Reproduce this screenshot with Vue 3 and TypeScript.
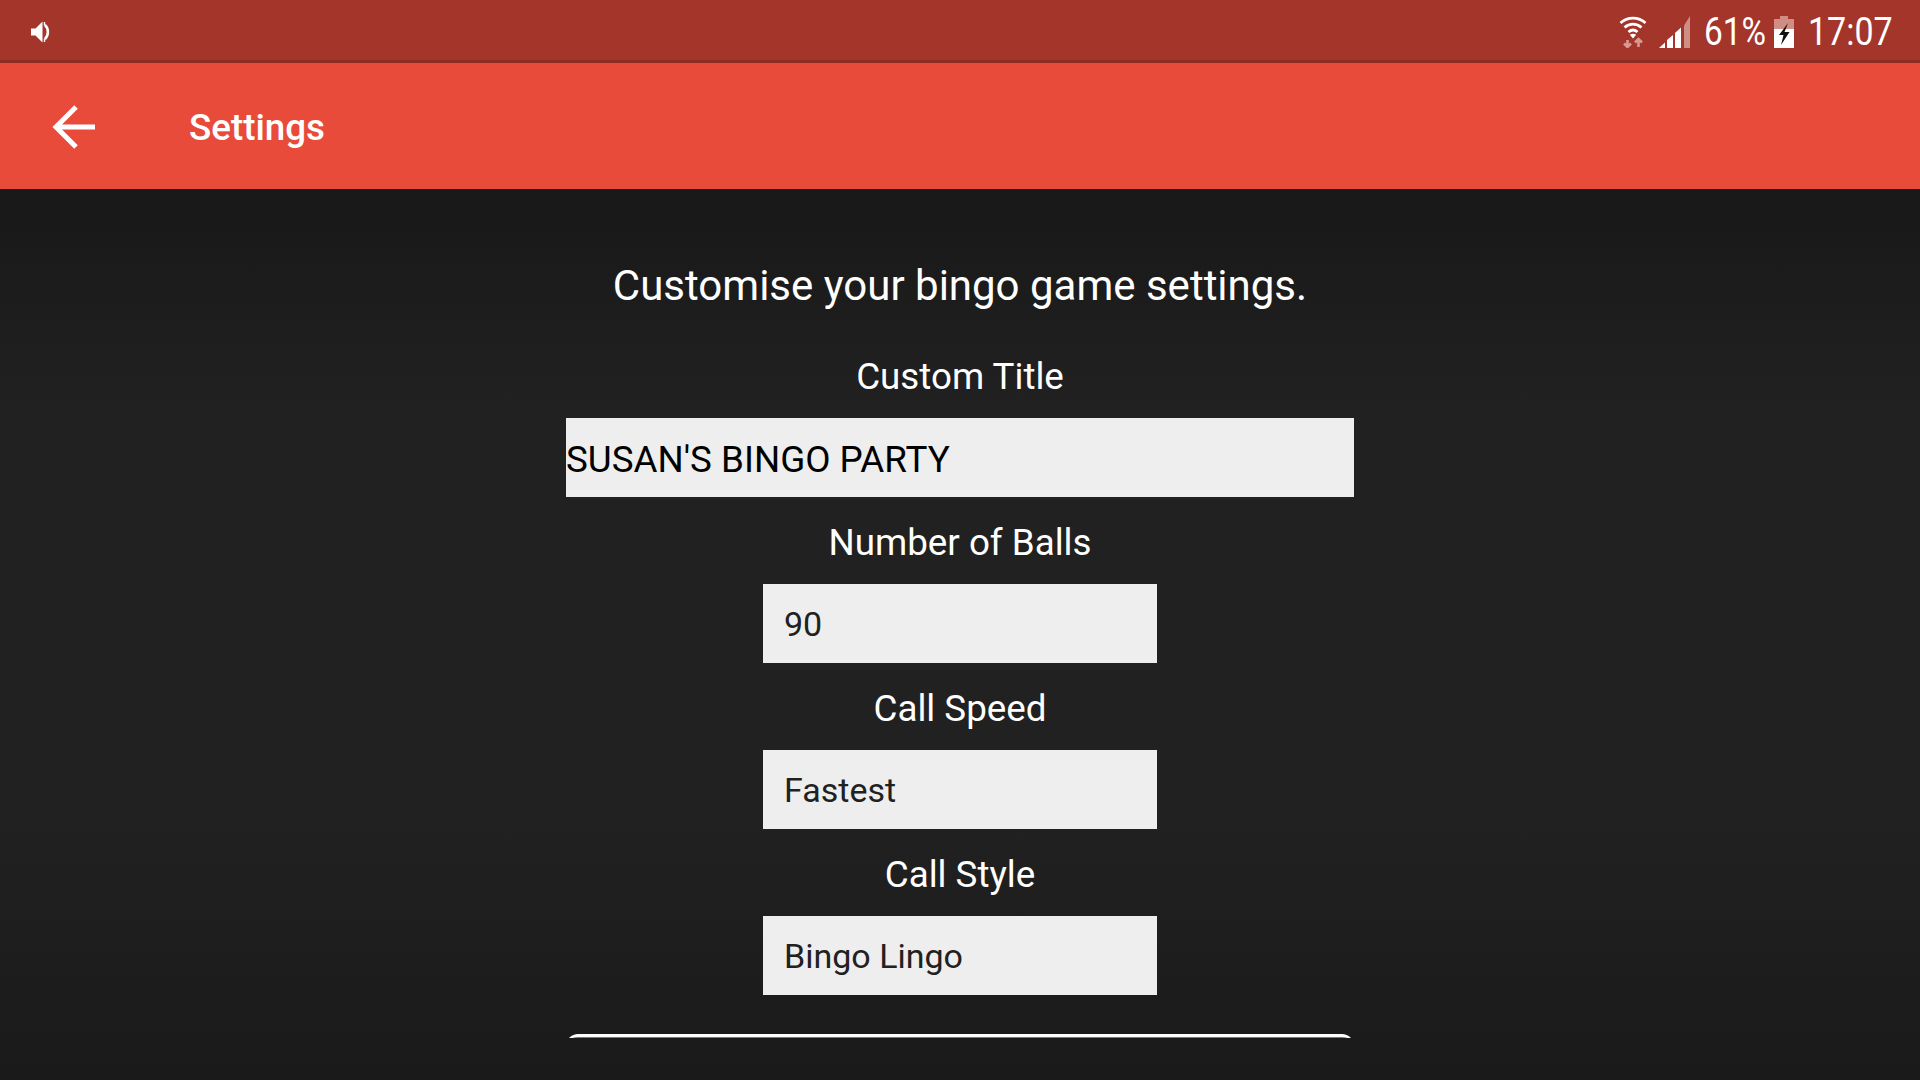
<script setup lang="ts">
interface Field { label: string; value: string; wide?: boolean }
const fields: Field[] = [
  { label: 'Custom Title', value: "SUSAN'S BINGO PARTY", wide: true },
  { label: 'Number of Balls', value: '90' },
  { label: 'Call Speed', value: 'Fastest' },
  { label: 'Call Style', value: 'Bingo Lingo' },
]
</script>

<template>
  <div class="screen">
    <header class="status">
      <svg class="vol" viewBox="0 0 22 22" width="22" height="22">
        <path d="M0 7.500h4.500L11.500 0.500v21l-7-7H0z" fill="#fff" />
        <path d="M14 4c3.800 3.500 3.800 10.500 0 14" fill="none" stroke="#fff" stroke-width="2.600" />
        <path d="M13.500 1v3.500M13.500 17.500V21" stroke="#fff" stroke-width="1.400" />
      </svg>
      <div class="status-right">
        <svg class="wifi" viewBox="0 0 28 33" width="28" height="33">
          <path d="M1.500 8C8.500 1.500 19.500 1.500 26.500 8" fill="none" stroke="#fff" stroke-width="2.800" />
          <path d="M5.500 12.500c5-4.500 12-4.500 17 0" fill="none" stroke="#fff" stroke-width="2.800" />
          <path d="M9.500 17c2.800-2.400 6.200-2.400 9 0" fill="none" stroke="#fff" stroke-width="2.800" />
          <path d="M14 23.500l-3.200-3.800c2.100-1.200 4.300-1.200 6.400 0z" fill="#fff" />
          <path d="M8.500 25v7M5 28.500l3.500 3.500 3.500-3.500" fill="none" stroke="#d99a92" stroke-width="2.600" />
          <path d="M19.500 32v-8M16 27.500l3.500-3.500 3.500 3.500" fill="none" stroke="#d99a92" stroke-width="2.600" />
        </svg>
        <svg class="signal" viewBox="0 0 31 32" width="31" height="32">
          <path d="M0 32l6-5.500V32z" fill="#fff" />
          <path d="M8 32v-8l6-5v13z" fill="#fff" />
          <path d="M16 32V17l6-5.500V32z" fill="#fff" />
          <path d="M25 32V9.500L31 0v32z" fill="#cf8d84" />
        </svg>
        <span class="num pct">61%</span>
        <svg class="batt" viewBox="0 0 20 32" width="20" height="32">
          <path d="M6 0h8v3h6v10H0V3h6z" fill="#cf8d84" />
          <rect x="0" y="13" width="20" height="19" fill="#fff" />
          <path d="M14 7L5 19h4.500L7 29 15.500 16H10.500L14 7z" fill="#111" />
        </svg>
        <span class="num clock">17:07</span>
      </div>
    </header>
    <nav class="toolbar">
      <svg class="back" viewBox="0 0 44 44" width="44" height="44">
        <path d="M43 22H4M24 2L4 22l20 20" fill="none" stroke="#fff" stroke-width="5" />
      </svg>
      <span class="title">Settings</span>
    </nav>
    <main class="content">
      <div class="clip">
        <h1 class="intro">Customise your bingo game settings.</h1>
        <div v-for="f in fields" :key="f.label" class="field">
          <label class="label">{{ f.label }}</label>
          <div class="input" :class="{ wide: f.wide }">{{ f.value }}</div>
        </div>
        <div class="button"></div>
      </div>
    </main>
  </div>
</template>

<style>
html, body { margin: 0; background: #1a1a1a; }
</style>

<style scoped>
.screen {
  width: 1920px;
  height: 1080px;
  display: flex;
  flex-direction: column;
  overflow: hidden;
  font-family: Roboto, "Liberation Sans", sans-serif;
  color: #fff;
}
.status {
  height: 63px;
  flex: none;
  box-sizing: border-box;
  background: #a3352a;
  border-bottom: 3px solid #8d2d23;
  display: flex;
  align-items: center;
  justify-content: space-between;
  padding: 3px 29px 0 31px;
}
.status-right { display: flex; align-items: center; }
.wifi { margin-right: 12px; }
.signal { margin-right: 14px; }
.num {
  display: inline-block;
  font-size: 38px;
  line-height: 44px;
  white-space: nowrap;
  transform: scaleX(0.88);
  transform-origin: left center;
}
.pct { width: 60px; margin-right: 10px; }
.batt { margin-right: 14px; }
.clock { width: 83px; transform: scaleX(0.895); }
.toolbar {
  height: 126px;
  background: #e94b3a;
  display: flex;
  align-items: center;
  padding-left: 52px;
  flex: none;
}
.back { margin-right: 93px; margin-top: 1px; }
.title { font-size: 36.75px; font-weight: 500; margin-top: 2px; }
.content {
  flex: 1;
  background: linear-gradient(#181818 0, #212121 25%, #212121 70%, #1a1a1a 100%);
}
.clip {
  height: 849px;
  overflow: hidden;
  display: flex;
  flex-direction: column;
  align-items: center;
}
.intro {
  margin: 72px 0 20px;
  font-size: 42px;
  font-weight: 400;
  line-height: 50px;
}
.field { display: flex; flex-direction: column; align-items: center; }
.label {
  font-size: 36.75px;
  line-height: 42px;
  margin-top: 25px;
  margin-bottom: 20px;
}
.input {
  width: 394px;
  height: 79px;
  box-sizing: border-box;
  background: #eeeeee;
  color: #212121;
  font-size: 34px;
  line-height: 79px;
  padding: 1px 0 0 21px;
}
.input.wide { width: 788px; padding: 2px 0 0; color: #000; font-size: 36.75px; }
.button {
  width: 788px;
  height: 80px;
  flex: none;
  box-sizing: border-box;
  margin-top: 39px;
  background: #e94b3a;
  border-top: 3px solid #fff;
  border-radius: 12px;
}
</style>
